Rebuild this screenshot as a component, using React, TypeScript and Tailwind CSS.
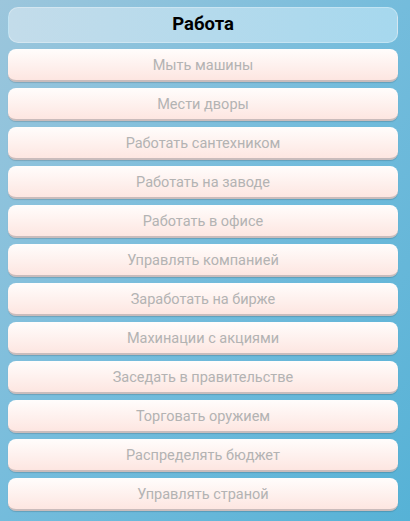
const jobs = [
  'Мыть машины',
  'Мести дворы',
  'Работать сантехником',
  'Работать на заводе',
  'Работать в офисе',
  'Управлять компанией',
  'Заработать на бирже',
  'Махинации с акциями',
  'Заседать в правительстве',
  'Торговать оружием',
  'Распределять бюджет',
  'Управлять страной',
];

export default function App() {
  return (
    <div
      className="w-[410px] h-[521px] overflow-hidden bg-gradient-to-br from-[#9cc6dc] via-[#74bcdc] to-[#56b2d6] pl-2 pr-3 pt-[7px] flex flex-col gap-[6px]"
      style={{ fontFamily: 'Roboto, "Noto Sans", sans-serif' }}
    >
      <div className="h-[36px] shrink-0 rounded-[10px] bg-gradient-to-r from-[#c3dcea] to-[#a6d8ee] border border-white/30 flex items-center justify-center">
        <span className="text-[18.5px] font-bold text-black">Работа</span>
      </div>
      {jobs.map(job => (
        <button
          key={job}
          className="h-[33px] shrink-0 rounded-[8px] bg-gradient-to-b from-[#fffdfc] to-[#fde6e1] border-b-2 border-[#c9bcbc] shadow-[0_1px_1px_rgba(0,0,0,0.15)] flex items-center justify-center pt-[2px]"
        >
          <span className="text-[14.5px] text-[#b3b3b3]">{job}</span>
        </button>
      ))}
    </div>
  );
}
